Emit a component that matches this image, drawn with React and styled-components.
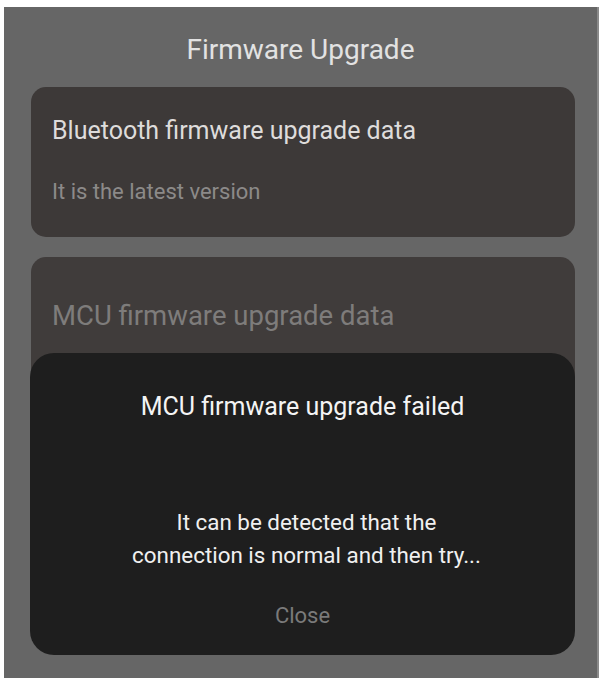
import styled, { createGlobalStyle } from 'styled-components';

const GlobalStyle = createGlobalStyle`
  html, body {
    margin: 0;
    padding: 0;
    background: #ffffff;
  }
  body {
    font-family: Roboto, "Noto Sans", "Liberation Sans", sans-serif;
  }
`

const Screen = styled.div`
  position: relative;
  box-sizing: border-box;
  margin: 7px 0 0 4px;
  width: 595px;
  height: 671px;
  background: #666666;
  border-right: 2px solid #8a8a8a;
  overflow: hidden;
`

const Title = styled.div`
  padding-top: 27px;
  margin-bottom: 21px;
  line-height: 32px;
  font-size: 28px;
  color: #e2e2e2;
  text-align: center;
`

const Card = styled.div`
  box-sizing: border-box;
  margin: ${({ gap }) => gap || 0}px 22px 0 27px;
  height: ${({ h }) => h}px;
  padding: ${({ pt }) => pt}px 21px 0;
  background: ${({ dim }) => (dim ? '#403c3b' : '#3d3938')};
  border-radius: 15px;
`

const CardTitle = styled.div`
  line-height: 30px;
  font-size: ${({ dim }) => (dim ? 27.5 : 25)}px;
  color: ${({ dim }) => (dim ? '#7e7c7b' : '#dedcdb')};
  white-space: nowrap;
`

const CardMeta = styled.div`
  margin-top: 33px;
  line-height: 26px;
  font-size: 22px;
  color: #8c8a89;
`

const Dialog = styled.div`
  position: absolute;
  top: 346px;
  left: 26px;
  width: 545px;
  height: 302px;
  box-sizing: border-box;
  padding-top: 39px;
  background: #1e1e1e;
  border-radius: 24px;
  display: flex;
  flex-direction: column;
  align-items: center;
  text-align: center;
`

const DialogTitle = styled.div`
  line-height: 30px;
  font-size: 25px;
  color: #f4f4f4;
`

const DialogMessage = styled.div`
  margin-top: 84px;
  padding-left: 8px;
  line-height: 33px;
  font-size: 22.4px;
  color: #f0f0f0;
`

const CloseButton = styled.button`
  margin-top: 29px;
  padding: 0;
  border: none;
  background: none;
  line-height: 30px;
  font-family: inherit;
  font-size: 22px;
  color: #7a7a7a;
  cursor: pointer;
`

export default function App() {
  return (
    <>
      <GlobalStyle />
      <Screen>
        <Title>Firmware Upgrade</Title>
        <Card h={150} pt={29}>
          <CardTitle>Bluetooth firmware upgrade data</CardTitle>
          <CardMeta>It is the latest version</CardMeta>
        </Card>
        <Card h={220} pt={44} gap={20} dim>
          <CardTitle dim>MCU firmware upgrade data</CardTitle>
        </Card>
        <Dialog>
          <DialogTitle>MCU firmware upgrade failed</DialogTitle>
          <DialogMessage>
            It can be detected that the
            <br />
            connection is normal and then try...
          </DialogMessage>
          <CloseButton>Close</CloseButton>
        </Dialog>
      </Screen>
    </>
  );
}
